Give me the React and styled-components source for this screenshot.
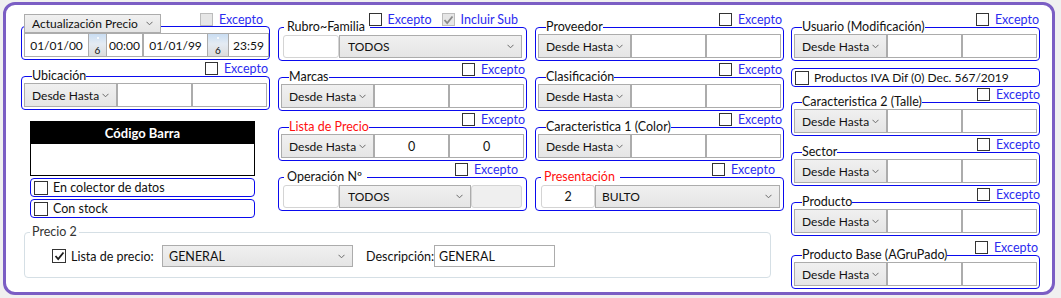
import React from "react";
import styled, { createGlobalStyle } from "styled-components";

const GlobalStyle = createGlobalStyle`
  body {
    margin: 0;
    background: #f0f0f0;
    font-family: Lato, "Open Sans", sans-serif;
    font-size: 12px;
    color: #111;
  }
`;

const Frame = styled.div`
  box-sizing: border-box;
  width: 1052px;
  height: 293px;
  margin: 2px 0 0 3px;
  border: 3px solid #7b5ec4;
  border-radius: 12px;
  background: #fff;
  padding: 8px 12px 0 15px;
  display: flex;
  gap: 7px;
`;

const LeftArea = styled.div`
  width: 763px;
  display: flex;
  flex-direction: column;
`;

const TopGrid = styled.div`
  display: grid;
  grid-template-columns: repeat(3, 249px);
  column-gap: 8px;
  align-items: start;
`;

const Column = styled.div`
  display: flex;
  flex-direction: column;
  width: 249px;
`;

const Item = styled.div`
  display: flex;
  flex-direction: column;
  margin-top: ${(p) => p.$mt ?? 0}px;
`;

const HeaderRow = styled.div`
  display: flex;
  align-items: flex-start;
  justify-content: ${(p) => (p.$split ? "space-between" : "flex-end")};
  height: ${(p) => p.$h ?? 13}px;
  padding: 0 ${(p) => p.$pr ?? 2}px 0 ${(p) => (p.$split ? 3 : 0)}px;
  gap: 10px;
`;

const CheckLabel = styled.label`
  display: inline-flex;
  align-items: center;
  gap: 6px;
  height: 13px;
  line-height: 13px;
  font-size: 12.5px;
  color: #2b2bef;
  white-space: nowrap;
`;

const Check = styled.span`
  box-sizing: border-box;
  width: ${(p) => p.$size ?? 13}px;
  height: ${(p) => p.$size ?? 13}px;
  flex: none;
  display: inline-flex;
  align-items: center;
  justify-content: center;
  border: 1px solid ${(p) => (p.$disabled ? "#bcbcbc" : "#333")};
  background: ${(p) => (p.$disabled ? "#e6e6e6" : "#fff")};
`;

const Box = styled.fieldset`
  margin: ${(p) => (p.$noLegend ? -7 : -6)}px 0 0;
  padding: ${(p) => (p.$noLegend ? 6 : 0)}px 2px 2px;
  border: 1px solid #0a0aee;
  border-radius: 4px;
  min-width: 0;
`;

const Legend = styled.legend`
  margin-left: ${(p) => (p.$spaced ? 3 : 8)}px;
  padding: ${(p) => (p.$spaced ? "0 5px 0 3px" : "0")};
  line-height: 14px;
  font-size: 12.5px;
  color: ${(p) => (p.$red ? "#ff1010" : "#111")};
`;

const InputRow = styled.div`
  display: grid;
  grid-template-columns: ${(p) => p.$cols};
  height: ${(p) => p.$h ?? 24}px;
  margin: ${(p) => p.$m ?? "0"};
`;

const Combo = styled.div`
  box-sizing: border-box;
  position: relative;
  z-index: 1;
  display: flex;
  align-items: center;
  justify-content: space-between;
  height: ${(p) => (p.$h ? `${p.$h}px` : "100%")};
  width: ${(p) => (p.$w ? `${p.$w}px` : "auto")};
  margin-top: ${(p) => p.$mt ?? 0}px;
  padding: 0 7px 0 ${(p) => p.$pl ?? 7}px;
  border: 1px solid #acacac;
  background: linear-gradient(#f0f0f0, #e5e5e5);
  white-space: nowrap;
`;

const TextBox = styled.div`
  box-sizing: border-box;
  display: flex;
  align-items: center;
  justify-content: ${(p) => (p.$left ? "flex-start" : "center")};
  padding: 0 4px;
  border: 1px solid ${(p) => (p.$soft ? "#d4d4d4" : "#acacac")};
  border-radius: ${(p) => (p.$soft ? 3 : 0)}px;
  background: ${(p) => (p.$disabled ? "#efefef" : "#fff")};
  width: ${(p) => (p.$w ? `${p.$w}px` : "auto")};
  height: ${(p) => (p.$h ? `${p.$h}px` : "auto")};
  font-size: ${(p) => (p.$big ? 12.5 : 12)}px;
`;

const Spin = styled.div`
  box-sizing: border-box;
  display: flex;
  flex-direction: column;
  align-items: center;
  justify-content: space-between;
  padding: 3px 0 1px;
  border: 1px solid #acacac;
  border-left: none;
  border-right: none;
  background: linear-gradient(#c9ddf2, #e4ebf3 45%, #dcdcdc);
  font-size: 10px;
  line-height: 10px;
`;

const Dot = styled.span`
  width: 2px;
  height: 2px;
  border-radius: 50%;
  background: #fff;
`;

const BarcodePanel = styled.div`
  margin: 11px 0 0 9px;
  width: 225px;
  border: 1px solid #000;
  box-sizing: border-box;
`;

const BarcodeHead = styled.div`
  height: 22px;
  background: #000;
  color: #fff;
  font-weight: 700;
  font-size: 13px;
  display: flex;
  align-items: center;
  justify-content: center;
`;

const BarcodeBody = styled.div`
  height: 31px;
  background: #fff;
`;

const CheckRow = styled.div`
  box-sizing: border-box;
  display: flex;
  align-items: center;
  gap: 5px;
  height: 19px;
  margin: ${(p) => p.$m ?? "2px 0 0 9px"};
  width: ${(p) => p.$w ?? 225}px;
  padding-left: 3px;
  border: 1px solid #0a0aee;
  border-radius: 4px;
  font-size: ${(p) => p.$fs ?? 12.5}px;
`;

const PriceGroup = styled.fieldset`
  box-sizing: border-box;
  margin: 7px 0 0 3px;
  width: 747px;
  padding: 6px 0 10px 5px;
  border: 1px solid #d5dfe5;
  border-radius: 4px;
`;

const PriceLegend = styled.legend`
  padding: 0 2px;
  line-height: 14px;
  font-size: 12.5px;
  color: #333;
`;

const PriceRow = styled.div`
  display: flex;
  align-items: center;
  height: 22px;
  margin-left: 22px;
  font-size: 12.5px;
`;

const FieldLabel = styled.span`
  width: ${(p) => p.$w}px;
  margin-left: ${(p) => p.$ml ?? 0}px;
  flex: none;
  white-space: nowrap;
`;

const Chevron = () => (
  <svg width="7" height="5" viewBox="0 0 7 5">
    <path d="M0.5 0.8 L3.5 3.8 L6.5 0.8" fill="none" stroke="#6a6a6a" strokeWidth="1" />
  </svg>
);

const Tick = ({ color = "#1e1e1e" }) => (
  <svg width="11" height="10" viewBox="0 0 11 10">
    <path d="M1.5 5 L4.2 8 L9.5 1.5" fill="none" stroke={color} strokeWidth="1.8" />
  </svg>
);

function Excepto({ disabled }) {
  return (
    <CheckLabel>
      <Check $disabled={disabled} />
      Excepto
    </CheckLabel>
  );
}

function RangeFilter({ label, red, spaced, pr, mt, from = "", to = "" }) {
  return (
    <Item $mt={mt}>
      <HeaderRow $pr={pr}>
        <Excepto />
      </HeaderRow>
      <Box>
        <Legend $red={red} $spaced={spaced}>
          {label}
        </Legend>
        <InputRow $cols="93px 1fr 1fr">
          <Combo>
            Desde Hasta
            <Chevron />
          </Combo>
          <TextBox $big>{from}</TextBox>
          <TextBox $big>{to}</TextBox>
        </InputRow>
      </Box>
    </Item>
  );
}

function DateRange() {
  return (
    <Item>
      <HeaderRow $h={20} $pr={7} $split>
        <Combo $w={137} $h={19} $mt={1}>
          Actualización Precio
          <Chevron />
        </Combo>
        <Excepto disabled />
      </HeaderRow>
      <Box $noLegend>
        <InputRow $cols="65px 17px 37px 65px 20px 1fr">
          <TextBox>01/01/00</TextBox>
          <Spin>
            <Dot />6
          </Spin>
          <TextBox>00:00</TextBox>
          <TextBox>01/01/99</TextBox>
          <Spin>
            <Dot />6
          </Spin>
          <TextBox>23:59</TextBox>
        </InputRow>
      </Box>
    </Item>
  );
}

export default function App() {
  return (
    <>
      <GlobalStyle />
      <Frame>
        <LeftArea>
          <TopGrid>
            <Column>
              <DateRange />
              <RangeFilter label="Ubicación" mt={2} />
              <BarcodePanel>
                <BarcodeHead>Código Barra</BarcodeHead>
                <BarcodeBody />
              </BarcodePanel>
              <CheckRow>
                <Check $size={14} />
                En colector de datos
              </CheckRow>
              <CheckRow>
                <Check $size={14} />
                Con stock
              </CheckRow>
            </Column>

            <Column>
              <Item>
                <HeaderRow $pr={9}>
                  <Excepto />
                  <CheckLabel>
                    <Check $disabled>
                      <Tick color="#8a8a8a" />
                    </Check>
                    Incluir Sub
                  </CheckLabel>
                </HeaderRow>
                <Box>
                  <Legend $spaced>Rubro~Familia</Legend>
                  <InputRow $cols="56px 1fr" $h={23} $m="1px 2px 0">
                    <TextBox $soft />
                    <Combo $pl={8}>
                      TODOS
                      <Chevron />
                    </Combo>
                  </InputRow>
                </Box>
              </Item>
              <RangeFilter label="Marcas" mt={2} />
              <RangeFilter label="Lista de Precio" red mt={2} from="0" to="0" />
              <Item $mt={2}>
                <HeaderRow $pr={9}>
                  <Excepto />
                </HeaderRow>
                <Box>
                  <Legend $spaced>Operación Nº</Legend>
                  <InputRow $cols="56px 132px 1fr" $h={23} $m="1px 2px 0">
                    <TextBox $soft />
                    <Combo $pl={8}>
                      TODOS
                      <Chevron />
                    </Combo>
                    <TextBox $soft $disabled />
                  </InputRow>
                </Box>
              </Item>
            </Column>

            <Column>
              <RangeFilter label="Proveedor" />
              <RangeFilter label="Clasificación" mt={2} />
              <RangeFilter label="Caracteristica 1 (Color)" mt={2} />
              <Item $mt={2}>
                <HeaderRow $pr={9}>
                  <Excepto />
                </HeaderRow>
                <Box>
                  <Legend $red $spaced>
                    Presentación
                  </Legend>
                  <InputRow $cols="54px 1fr" $h={23} $m="1px 1px 0 3px">
                    <TextBox $soft $big>2</TextBox>
                    <Combo $pl={6}>
                      BULTO
                      <Chevron />
                    </Combo>
                  </InputRow>
                </Box>
              </Item>
            </Column>
          </TopGrid>

          <PriceGroup>
            <PriceLegend>Precio 2</PriceLegend>
            <PriceRow>
              <Check $size={14}>
                <Tick />
              </Check>
              <FieldLabel $w={91} $ml={5}>
                Lista de precio:
              </FieldLabel>
              <Combo $w={191} $h={22} $pl={6}>
                GENERAL
                <Chevron />
              </Combo>
              <FieldLabel $w={68} $ml={13}>
                Descripción:
              </FieldLabel>
              <TextBox $w={121} $h={22} $left $big>
                GENERAL
              </TextBox>
            </PriceRow>
          </PriceGroup>
        </LeftArea>

        <Column>
          <RangeFilter label="Usuario (Modificación)" pr={1} />
          <CheckRow $m="7px 0 0 0" $w={249} $fs={12}>
            <Check $size={14} />
            Productos IVA Dif (0) Dec. 567/2019
          </CheckRow>
          <RangeFilter label="Caracteristica 2 (Talle)" mt={1} pr={0} />
          <RangeFilter label="Sector" mt={2} pr={0} />
          <RangeFilter label="Producto" mt={2} pr={0} />
          <RangeFilter label="Producto Base (AGruPado)" mt={5} pr={2} />
        </Column>
      </Frame>
    </>
  );
}
